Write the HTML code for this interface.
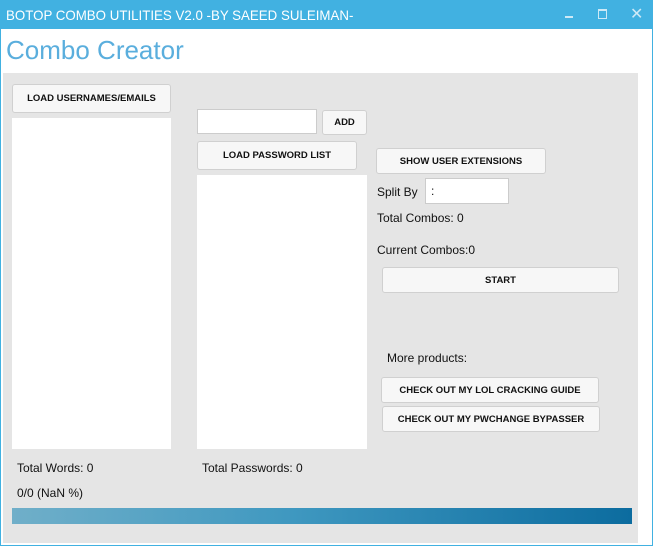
<!DOCTYPE html><html><head><style>
body{margin:0;width:653px;height:546px;background:#fff;font-family:"Liberation Sans",sans-serif;position:relative;overflow:hidden}
.a{position:absolute}
.btn{position:absolute;background:#f7f7f7;border:1px solid #d0d0d0;border-radius:3px;box-sizing:border-box;font-size:9.5px;font-weight:bold;color:#111;display:flex;align-items:center;justify-content:center}
.box{position:absolute;background:#fff}
.t{position:absolute;font-size:12px;color:#111;white-space:nowrap}
</style></head><body>
<div class="a" style="left:0;top:0;width:653px;height:29px;background:#41b1e1"></div>
<div class="a" style="left:0;top:0;width:1px;height:546px;background:#41b1e1"></div>
<div class="a" style="right:0;top:0;width:1px;height:546px;background:#41b1e1"></div>
<div class="a" style="left:0;bottom:0;width:653px;height:1px;background:#41b1e1"></div>
<div class="t" style="left:6px;top:7px;color:#fff;font-size:14px;transform:scaleX(0.95);transform-origin:left">BOTOP COMBO UTILITIES V2.0 -BY SAEED SULEIMAN-</div>
<div class="a" style="left:565px;top:16px;width:8px;height:2px;background:#cde9f6"></div>
<div class="a" style="left:598px;top:9px;width:7px;height:7px;border:1px solid #cde9f6;border-top-width:2px"></div>
<div class="t" style="left:630px;top:4px;color:#cde9f6;font-size:16px">✕</div>
<div class="t" style="left:6px;top:35px;color:#5aaedd;font-size:26px">Combo Creator</div>
<div class="a" style="left:3px;top:73px;width:635px;height:470px;background:#e5e5e5"></div>
<div class="btn" style="left:12px;top:84px;width:159px;height:29px">LOAD USERNAMES/EMAILS</div>
<div class="box" style="left:12px;top:118px;width:159px;height:331px"></div>
<div class="box" style="left:197px;top:109px;width:120px;height:25px;border:1px solid #ccc;box-sizing:border-box"></div>
<div class="btn" style="left:322px;top:110px;width:45px;height:25px">ADD</div>
<div class="btn" style="left:197px;top:141px;width:160px;height:29px">LOAD PASSWORD LIST</div>
<div class="box" style="left:197px;top:175px;width:170px;height:274px"></div>
<div class="btn" style="left:376px;top:148px;width:170px;height:26px">SHOW USER EXTENSIONS</div>
<div class="t" style="left:377px;top:185px">Split By</div>
<div class="box" style="left:425px;top:178px;width:84px;height:26px;border:1px solid #ccc;box-sizing:border-box"></div>
<div class="t" style="left:431px;top:184px">:</div>
<div class="t" style="left:377px;top:211px">Total Combos: 0</div>
<div class="t" style="left:377px;top:243px">Current Combos:0</div>
<div class="btn" style="left:382px;top:267px;width:237px;height:26px">START</div>
<div class="t" style="left:387px;top:351px">More products:</div>
<div class="btn" style="left:381px;top:377px;width:218px;height:26px">CHECK OUT MY LOL CRACKING GUIDE</div>
<div class="btn" style="left:382px;top:406px;width:218px;height:26px">CHECK OUT MY PWCHANGE BYPASSER</div>
<div class="t" style="left:17px;top:461px">Total Words: 0</div>
<div class="t" style="left:202px;top:461px">Total Passwords: 0</div>
<div class="t" style="left:17px;top:486px">0/0 (NaN %)</div>
<div class="a" style="left:12px;top:508px;width:620px;height:16px;background:linear-gradient(90deg,#70afc9,#3f98c0 45%,#0c6c9f)"></div>
</body></html>
